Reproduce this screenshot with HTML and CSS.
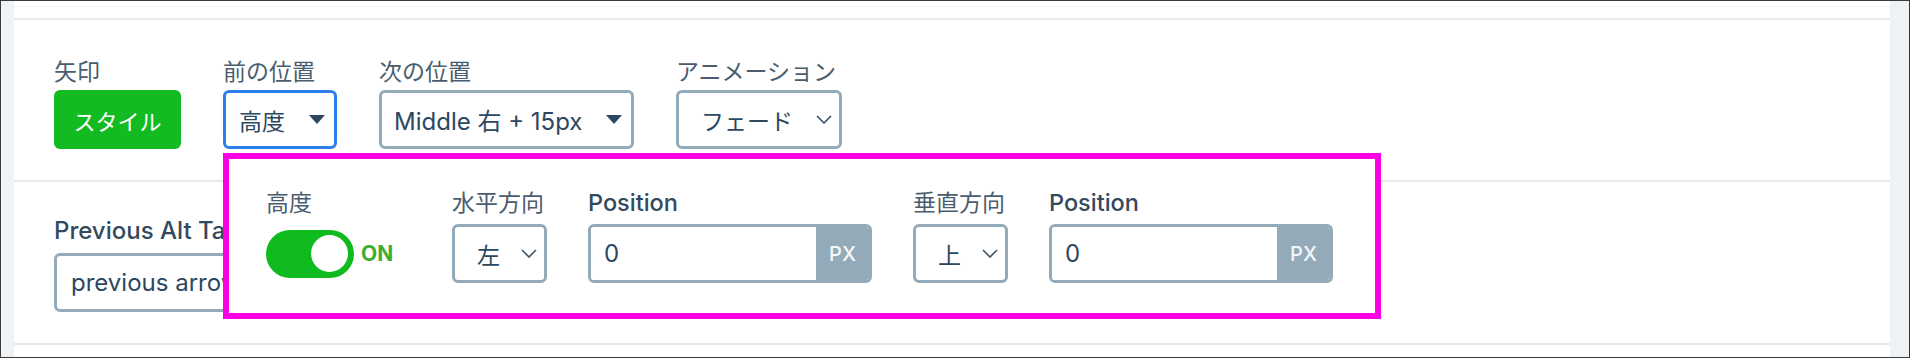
FILE: index.html
```html
<!DOCTYPE html>
<html lang="ja">
<head>
  <meta charset="UTF-8" />
  <title>矢印の設定</title>
  <link rel="stylesheet" href="styles.css">
</head>
<body>

<div class="frame">
  <div class="gutter"></div>

  <main class="panel">
    <div class="topbar"></div>

    <section class="row">
      <div class="field">
        <label>矢印</label>
        <button class="btn-style">スタイル</button>
      </div>
      <div class="field">
        <label>前の位置</label>
        <div class="select select-pos is-open">
          <span>高度</span>
          <svg class="caret" width="16" height="9" viewBox="0 0 16 9"><path d="M0 0h16L8 9z" fill="#2c4760"/></svg>
        </div>
      </div>
      <div class="field">
        <label>次の位置</label>
        <div class="select select-next">
          <span>Middle 右 + 15px</span>
          <svg class="caret" width="16" height="9" viewBox="0 0 16 9"><path d="M0 0h16L8 9z" fill="#2c4760"/></svg>
        </div>
      </div>
      <div class="field">
        <label>アニメーション</label>
        <div class="select native select-anim">
          <span>フェード</span>
          <svg class="chevron" width="16" height="9" viewBox="0 0 16 9"><path d="M1 1l7 7 7-7" fill="none" stroke="#3b5366" stroke-width="1.6"/></svg>
        </div>
      </div>
    </section>

    <section class="row">
      <div class="field">
        <label class="strong">Previous Alt Tag</label>
        <input type="text" class="text-input" value="previous arrow" />
      </div>
    </section>

    <!-- 前の位置 のドロップダウン -->
    <div class="popover">
      <div class="field col-toggle">
        <label>高度</label>
        <div class="toggle-wrap">
          <span class="toggle on"><span class="knob"></span></span>
          <span class="toggle-text">ON</span>
        </div>
      </div>
      <div class="field">
        <label>水平方向</label>
        <div class="select native select-small">
          <span>左</span>
          <svg class="chevron" width="16" height="9" viewBox="0 0 16 9"><path d="M1 1l7 7 7-7" fill="none" stroke="#3b5366" stroke-width="1.6"/></svg>
        </div>
      </div>
      <div class="field">
        <label class="strong">Position</label>
        <div class="input-group">
          <input type="text" value="0" />
          <span class="addon">PX</span>
        </div>
      </div>
      <div class="field">
        <label>垂直方向</label>
        <div class="select native select-small">
          <span>上</span>
          <svg class="chevron" width="16" height="9" viewBox="0 0 16 9"><path d="M1 1l7 7 7-7" fill="none" stroke="#3b5366" stroke-width="1.6"/></svg>
        </div>
      </div>
      <div class="field">
        <label class="strong">Position</label>
        <div class="input-group">
          <input type="text" value="0" />
          <span class="addon">PX</span>
        </div>
      </div>
    </div>
  </main>

  <div class="scroll"></div>
</div>

</body>
</html>
```

FILE: styles.css
```css
body {
  margin: 0;
  font-family: 'Inter', 'Noto Sans CJK JP', sans-serif;
  color: #2c4760;
  background: #fff;
}
.frame {
  width: 1910px;
  height: 358px;
  box-sizing: border-box;
  border: 1px solid #3a3a3a;
  display: flex;
  overflow: hidden;
}
.gutter {
  width: 13px;
  background: #eff3f6;
}
.scroll {
  width: 19px;
  background: #eef2f5;
}
.panel {
  flex: 1;
  position: relative;
  background: #fff;
}
.topbar {
  height: 12px;
  padding-top: 5px;
  border-bottom: 2px solid #e7eaed;
}
.topbar::before {
  content: '';
  display: block;
  height: 1px;
  background: #f2f4f6;
}
.row {
  display: flex;
  gap: 42px;
  padding: 38px 40px 31px;
  border-bottom: 2px solid #e7eaed;
}
.row + .row {
  padding-top: 35px;
}
.field {
  display: flex;
  flex-direction: column;
}
.field label {
  font-size: 23px;
  line-height: 28px;
  color: #4a5d6e;
  margin-bottom: 4px;
  white-space: nowrap;
}
.row + .row .field label {
  margin-bottom: 8px;
}
.field label.strong {
  font-size: 23.5px;
  font-weight: 500;
  color: #33495d;
}
.row + .row .field label.strong {
  font-size: 24px;
}
.btn-style {
  width: 127px;
  height: 59px;
  border: none;
  border-radius: 6px;
  background: #12bb21;
  color: #fff;
  font-family: inherit;
  font-size: 22px;
  padding: 0;
}
.select {
  height: 59px;
  box-sizing: border-box;
  border: 3px solid #93abb8;
  border-radius: 6px;
  display: flex;
  align-items: center;
  justify-content: space-between;
  padding: 0 9px 0 13px;
  font-size: 23px;
  color: #2c4760;
  white-space: nowrap;
}
.select.is-open {
  border-color: #2d7fea;
}
.select-pos {
  width: 114px;
}
.select-next {
  width: 255px;
  padding-left: 12px;
  font-size: 24px;
}
.select.native {
  padding: 0 7px 0 22px;
}
.select-anim {
  width: 166px;
}
.select-small {
  width: 95px;
}
.text-input {
  width: 330px;
  height: 59px;
  box-sizing: border-box;
  border: 3px solid #93abb8;
  border-radius: 6px;
  padding: 0 14px;
  font-family: inherit;
  font-size: 24px;
  color: #2c4760;
}

/* dropdown */
.popover {
  position: absolute;
  left: 209px;
  top: 152px;
  width: 1158px;
  height: 166px;
  box-sizing: border-box;
  border: 6px solid #fa00e4;
  background: #fff;
  padding: 30px 37px;
  display: flex;
  gap: 41px;
}
.popover .field label {
  margin-bottom: 7px;
}
.col-toggle {
  width: 145px;
}
.toggle-wrap {
  height: 59px;
  display: flex;
  align-items: center;
  gap: 7px;
}
.toggle {
  width: 88px;
  height: 48px;
  border-radius: 24px;
  background: #10bb1f;
  display: flex;
  align-items: center;
  justify-content: flex-end;
  padding: 0 6px;
  box-sizing: border-box;
}
.knob {
  width: 37px;
  height: 37px;
  border-radius: 50%;
  background: #fff;
}
.toggle-text {
  font-size: 21px;
  font-weight: 700;
  color: #3dae2e;
}
.input-group {
  width: 284px;
  height: 59px;
  box-sizing: border-box;
  border: 3px solid #93abb8;
  border-radius: 6px;
  display: flex;
  overflow: hidden;
}
.input-group input {
  flex: 1;
  min-width: 0;
  border: none;
  padding: 0 13px;
  font-family: inherit;
  font-size: 24px;
  color: #2c4760;
  outline: none;
}
.addon {
  width: 53px;
  background: #93abb8;
  color: #f4f7f9;
  font-size: 20px;
  font-weight: 500;
  display: flex;
  align-items: center;
  justify-content: center;
}
```
